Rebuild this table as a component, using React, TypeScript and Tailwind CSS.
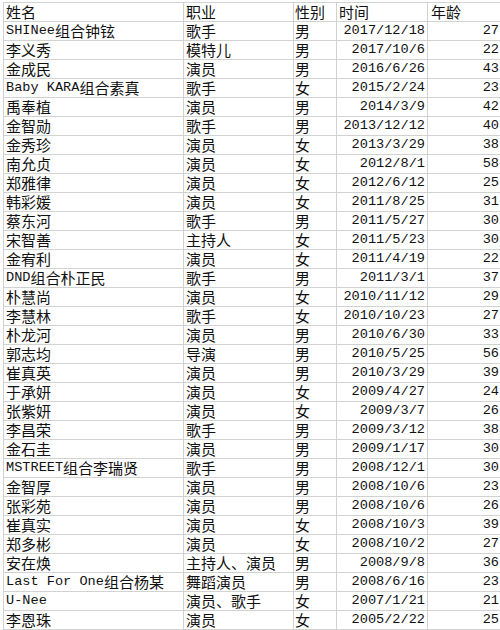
import React from "react";

const rows: [string, string, string, string, string][] = [
  ["SHINee组合钟铉", "歌手", "男", "2017/12/18", "27"],
  ["李义秀", "模特儿", "男", "2017/10/6", "22"],
  ["金成民", "演员", "男", "2016/6/26", "43"],
  ["Baby KARA组合素真", "歌手", "女", "2015/2/24", "23"],
  ["禹奉植", "演员", "男", "2014/3/9", "42"],
  ["金智勋", "歌手", "男", "2013/12/12", "40"],
  ["金秀珍", "演员", "女", "2013/3/29", "38"],
  ["南允贞", "演员", "女", "2012/8/1", "58"],
  ["郑雅律", "演员", "女", "2012/6/12", "25"],
  ["韩彩媛", "演员", "女", "2011/8/25", "31"],
  ["蔡东河", "歌手", "男", "2011/5/27", "30"],
  ["宋智善", "主持人", "女", "2011/5/23", "30"],
  ["金宥利", "演员", "女", "2011/4/19", "22"],
  ["DND组合朴正民", "歌手", "男", "2011/3/1", "37"],
  ["朴慧尚", "演员", "女", "2010/11/12", "29"],
  ["李慧林", "歌手", "女", "2010/10/23", "27"],
  ["朴龙河", "演员", "男", "2010/6/30", "33"],
  ["郭志均", "导演", "男", "2010/5/25", "56"],
  ["崔真英", "演员", "男", "2010/3/29", "39"],
  ["于承妍", "演员", "女", "2009/4/27", "24"],
  ["张紫妍", "演员", "女", "2009/3/7", "26"],
  ["李昌荣", "歌手", "男", "2009/3/12", "38"],
  ["金石圭", "演员", "男", "2009/1/17", "30"],
  ["MSTREET组合李瑞贤", "歌手", "男", "2008/12/1", "30"],
  ["金智厚", "演员", "男", "2008/10/6", "23"],
  ["张彩苑", "演员", "男", "2008/10/6", "26"],
  ["崔真实", "演员", "女", "2008/10/3", "39"],
  ["郑多彬", "演员", "女", "2008/10/2", "27"],
  ["安在焕", "主持人、演员", "男", "2008/9/8", "36"],
  ["Last For One组合杨某", "舞蹈演员", "男", "2008/6/16", "23"],
  ["U-Nee", "演员、歌手", "女", "2007/1/21", "21"],
  ["李恩珠", "演员", "女", "2005/2/22", "25"],
];

// latin runs get the narrower mono face, like SimSun's half-width glyphs
const Mixed = ({ text }: { text: string }) => (
  <>
    {text.split(/([\x00-\x7F]+)/).map((part, i) =>
      /^[\x00-\x7F]+$/.test(part) ? (
        <span key={i} className="text-[13.6px] font-['Liberation_Mono',monospace]">
          {part.replace(/ /g, "\u00a0")}
        </span>
      ) : (
        <span key={i}>{part}</span>
      )
    )}
  </>
);

const cell =
  "border-r border-b border-[#d2d2d2] flex items-center whitespace-nowrap overflow-visible leading-[18px]";

export default function App() {
  return (
    <div className="w-[500px] h-[630px] overflow-hidden bg-white pl-[3px] pt-[2px] text-[15px] text-[#111] font-['Noto_Sans_CJK_SC',sans-serif]">
      <div className="grid grid-cols-[180px_110px_43px_91px_80px] auto-rows-[19px] border-l border-t border-[#d2d2d2] w-[504px]">
        <div className={`${cell} pl-[2px]`}>姓名</div>
        <div className={`${cell} pl-[2px]`}>职业</div>
        <div className={`${cell} pl-[1px]`}>性别</div>
        <div className={`${cell} pl-[2px]`}>时间</div>
        <div className={`${cell} pl-[3px]`}>年龄</div>
        {rows.map(([name, job, sex, date, age]) => (
          <React.Fragment key={name}>
            <div className={`${cell} pl-[2px]`}>
              <Mixed text={name} />
            </div>
            <div className={`${cell} pl-[2px]`}>{job}</div>
            <div className={`${cell} pl-[1px]`}>{sex}</div>
            <div className={`${cell} justify-end pr-[2px] text-[13.6px] font-['Liberation_Mono',monospace]`}>
              {date}
            </div>
            <div className={`${cell} justify-end pr-[8px] text-[13.6px] font-['Liberation_Mono',monospace]`}>
              {age}
            </div>
          </React.Fragment>
        ))}
      </div>
    </div>
  );
}
